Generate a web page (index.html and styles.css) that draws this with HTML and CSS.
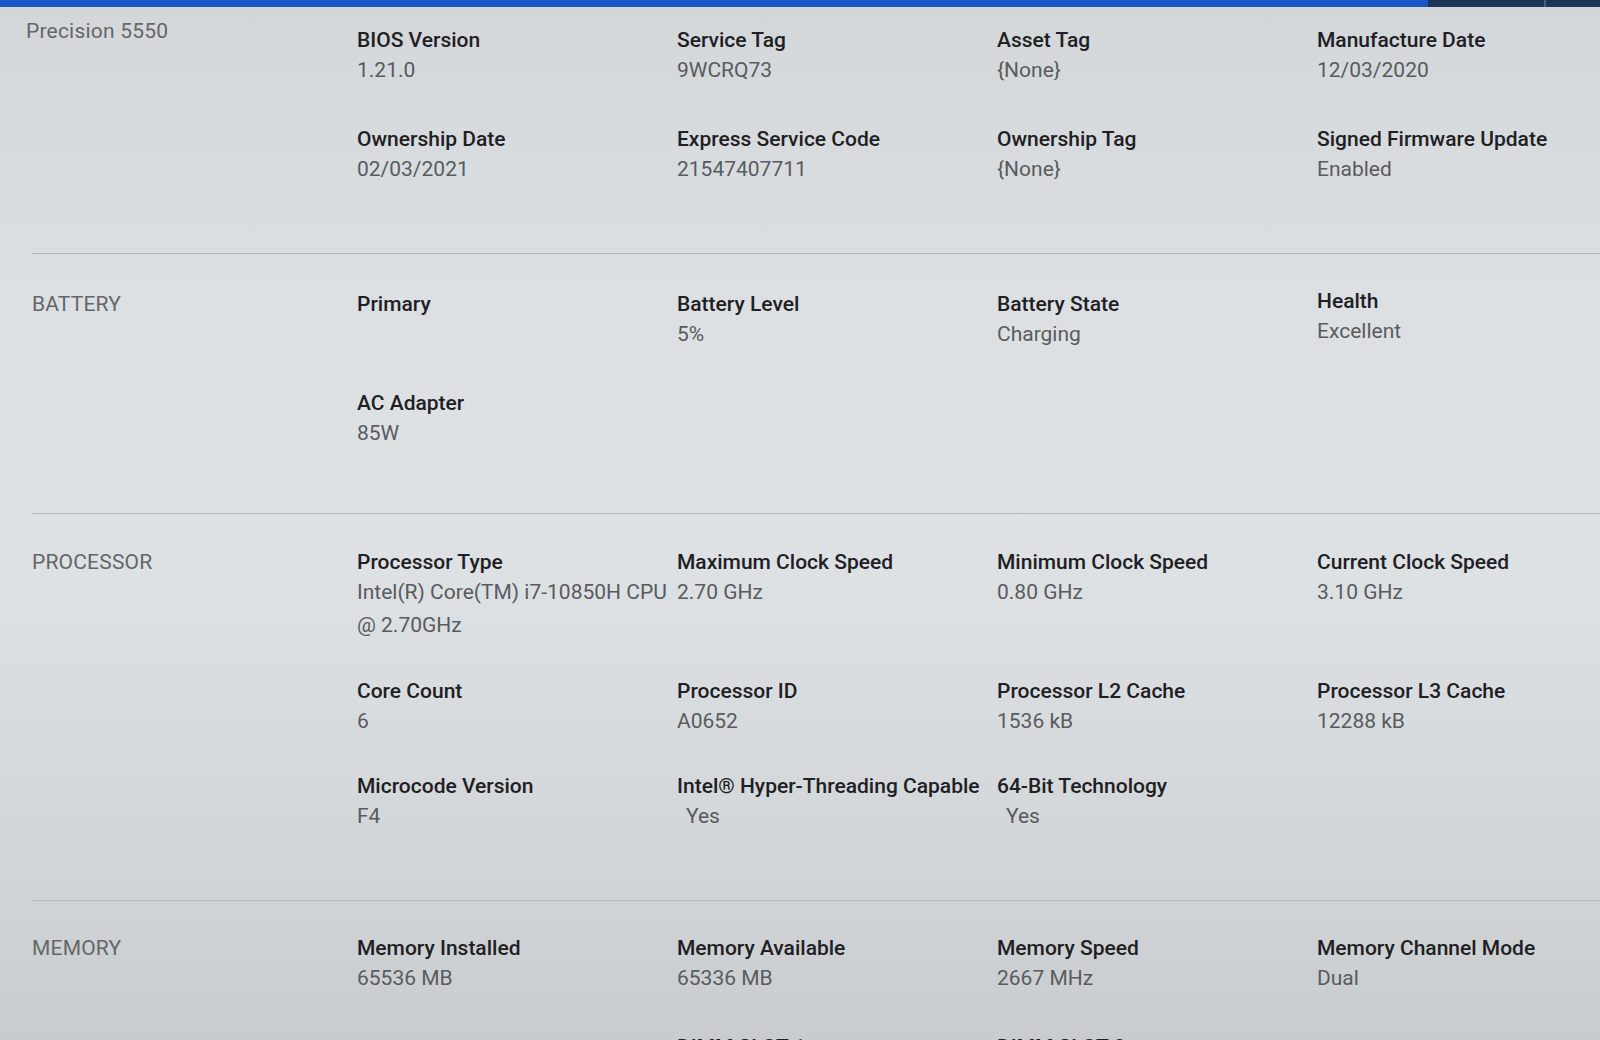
FILE: index.html
```html
<!DOCTYPE html>
<html lang="en">
<head>
<meta charset="utf-8">
<title>System Information</title>
<link rel="stylesheet" href="styles.css">
</head>
<body>
<div class="topbar">
  <div class="tb-main"></div>
  <div class="tb-side"><span class="tb-sep"></span></div>
</div>
<main class="page">
  <section class="section section-first">
    <div class="section-title title-raised">Precision 5550</div>
    <div class="grid">
      <div class="item"><div class="label">BIOS Version</div><div class="value">1.21.0</div></div>
      <div class="item"><div class="label">Service Tag</div><div class="value">9WCRQ73</div></div>
      <div class="item"><div class="label">Asset Tag</div><div class="value">{None}</div></div>
      <div class="item"><div class="label">Manufacture Date</div><div class="value">12/03/2020</div></div>
      <div class="item"><div class="label">Ownership Date</div><div class="value">02/03/2021</div></div>
      <div class="item"><div class="label">Express Service Code</div><div class="value">21547407711</div></div>
      <div class="item"><div class="label">Ownership Tag</div><div class="value">{None}</div></div>
      <div class="item"><div class="label">Signed Firmware Update</div><div class="value">Enabled</div></div>
    </div>
  </section>

  <section class="section">
    <div class="section-title">BATTERY</div>
    <div class="grid">
      <div class="item"><div class="label">Primary</div></div>
      <div class="item"><div class="label">Battery Level</div><div class="value">5%</div></div>
      <div class="item"><div class="label">Battery State</div><div class="value">Charging</div></div>
      <div class="item item-raised"><div class="label">Health</div><div class="value">Excellent</div></div>
      <div class="item"><div class="label">AC Adapter</div><div class="value">85W</div></div>
    </div>
  </section>

  <section class="section section-proc">
    <div class="section-title">PROCESSOR</div>
    <div class="grid grid-proc">
      <div class="item"><div class="label">Processor Type</div><div class="value value-multi">Intel(R) Core(TM) i7-10850H CPU<br>@ 2.70GHz</div></div>
      <div class="item"><div class="label">Maximum Clock Speed</div><div class="value">2.70 GHz</div></div>
      <div class="item"><div class="label">Minimum Clock Speed</div><div class="value">0.80 GHz</div></div>
      <div class="item"><div class="label">Current Clock Speed</div><div class="value">3.10 GHz</div></div>
      <div class="item"><div class="label">Core Count</div><div class="value">6</div></div>
      <div class="item"><div class="label">Processor ID</div><div class="value">A0652</div></div>
      <div class="item"><div class="label">Processor L2 Cache</div><div class="value">1536 kB</div></div>
      <div class="item"><div class="label">Processor L3 Cache</div><div class="value">12288 kB</div></div>
      <div class="item"><div class="label">Microcode Version</div><div class="value">F4</div></div>
      <div class="item"><div class="label">Intel® Hyper-Threading Capable</div><div class="value value-indent">Yes</div></div>
      <div class="item"><div class="label">64-Bit Technology</div><div class="value value-indent">Yes</div></div>
    </div>
  </section>

  <section class="section section-last">
    <div class="section-title">MEMORY</div>
    <div class="grid">
      <div class="item"><div class="label">Memory Installed</div><div class="value">65536 MB</div></div>
      <div class="item"><div class="label">Memory Available</div><div class="value">65336 MB</div></div>
      <div class="item"><div class="label">Memory Speed</div><div class="value">2667 MHz</div></div>
      <div class="item"><div class="label">Memory Channel Mode</div><div class="value">Dual</div></div>
      <div class="item"></div>
      <div class="item"><div class="label">DIMM SLOT 1</div><div class="value">32 GB DDR4</div></div>
      <div class="item"><div class="label">DIMM SLOT 2</div><div class="value">32 GB DDR4</div></div>
    </div>
  </section>
</main>
</body>
</html>
```

FILE: styles.css
```css
html, body {
  margin: 0;
  padding: 0;
}

body {
  width: 1600px;
  height: 1040px;
  overflow: hidden;
  font-family: Roboto, "Liberation Sans", sans-serif;
  font-size: 21px;
  background: linear-gradient(180deg, #d3d7da 0%, #dce0e2 30%, #dde1e3 55%, #d3d7d9 80%, #c8ccce 100%);
}

.topbar {
  display: flex;
  height: 7px;
}

.tb-main {
  flex: 1;
  background: #1d57c3;
}

.tb-side {
  width: 172px;
  background: #1b3657;
  display: flex;
  padding-left: 116px;
  box-sizing: border-box;
}

.tb-sep {
  width: 2px;
  background: #3e6290;
}

.page {
  display: flex;
  flex-direction: column;
}

.section {
  display: grid;
  grid-template-columns: 325px 1fr;
  margin-left: 32px;
  padding: 36px 0 64px;
  border-top: 1px solid #b3b8bb;
}

.section-first {
  border-top: none;
  padding-top: 19px;
  padding-bottom: 68px;
}

.section-proc {
  padding-top: 34px;
  padding-bottom: 68px;
}

.section-last {
  padding-top: 33px;
}

.section-title {
  color: #646769;
  line-height: 28px;
  letter-spacing: 0.2px;
}

.title-raised {
  margin-top: -9px;
  margin-left: -6px;
}

.grid {
  display: grid;
  grid-template-columns: repeat(4, 320px);
  row-gap: 39px;
  align-items: start;
}

.grid-proc {
  row-gap: 35px;
}

.item-raised {
  margin-top: -3px;
}

.label {
  color: #1f2023;
  font-weight: 500;
  line-height: 28px;
}

.value {
  color: #595b5e;
  line-height: 32px;
}

.value-multi {
  line-height: 33px;
}

.value-indent {
  padding-left: 9px;
}
```
